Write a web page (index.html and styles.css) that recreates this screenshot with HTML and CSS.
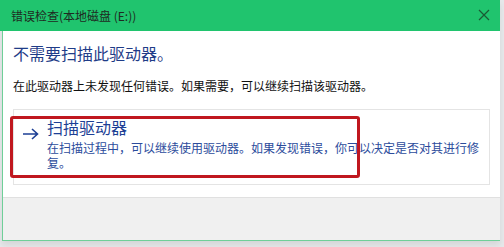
FILE: index.html
```html
<!DOCTYPE html>
<html lang="zh-CN">
<head>
    <meta charset="UTF-8">
    <meta name="viewport" content="width=device-width, initial-scale=1.0">
    <title>错误检查</title>
    <link rel="stylesheet" href="styles.css">
</head>
<body>
    <div class="window">
        <div class="titlebar">
            <span class="title">错误检查(本地磁盘 (E:))</span>
            <svg class="close" width="12" height="12" viewBox="0 0 12 12">
                <path d="M1 1 L11 11 M11 1 L1 11" stroke="#1a5a34" stroke-width="1.2" fill="none"/>
            </svg>
        </div>
        <div class="content">
            <h1 class="heading">不需要扫描此驱动器。</h1>
            <p class="message">在此驱动器上未发现任何错误。如果需要，可以继续扫描该驱动器。</p>
            <div class="command-link">
                <span class="arrow">
                    <svg width="17" height="12" viewBox="0 0 17 12">
                        <path d="M1 6 H15 M10 1 L15.5 6 L10 11" stroke="#1d3f95" stroke-width="1.6" fill="none"/>
                    </svg>
                </span>
                <div class="command-text">
                    <div class="command-title">扫描驱动器</div>
                    <div class="command-desc">在扫描过程中，可以继续使用驱动器。如果发现错误，你可以决定是否对其进行修复。</div>
                </div>
            </div>
            <div class="highlight"></div>
        </div>
        <div class="footer"></div>
    </div>
</body>
</html>
```

FILE: styles.css
```css
body {
    margin: 0;
    background-color: #e6e8ea;
    font-family: "Noto Sans CJK SC", "Noto Sans", sans-serif;
    height: 247px;
    overflow: hidden;
}
.window {
    margin-left: 2px;
    width: 497px;
    background: #fff;
    border-left: 1px solid #6fcf98;
    border-bottom: 1px solid #6fcf98;
    box-shadow: 0 4px 6px rgba(0, 0, 0, 0.08);
}
.titlebar {
    height: 31px;
    margin-left: -3px;
    background-color: #20c46e;
    display: flex;
    align-items: center;
    justify-content: space-between;
    padding: 0 10px 0 11px;
}
.title {
    font-size: 12px;
    color: #1f2a22;
}
.close {
    margin-top: -2px;
}
.content {
    position: relative;
    padding: 10px 10px 12px 10px;
}
.heading {
    margin: 0;
    font-size: 16px;
    font-weight: normal;
    color: #1f3c88;
    line-height: 24px;
}
.message {
    margin: 12px 0 0 0;
    font-size: 12px;
    color: #111;
    line-height: 18px;
}
.command-link {
    margin-top: 14px;
    border: 1px solid #e4e4e4;
    display: flex;
    gap: 8px;
    padding: 6px 10px 14px 8px;
}
.arrow {
    padding-top: 5px;
}
.command-title {
    font-size: 16px;
    color: #1d3f95;
    line-height: 22px;
}
.command-desc {
    font-size: 12px;
    color: #2c4c9c;
    line-height: 15px;
    margin-top: 2px;
}
.highlight {
    position: absolute;
    left: 7px;
    top: 85px;
    width: 344px;
    height: 56px;
    border: 3px solid #c0171f;
    border-radius: 3px;
}
.footer {
    height: 42px;
    background-color: #f0f0f0;
    border-top: 1px solid #e0e0e0;
}
```
